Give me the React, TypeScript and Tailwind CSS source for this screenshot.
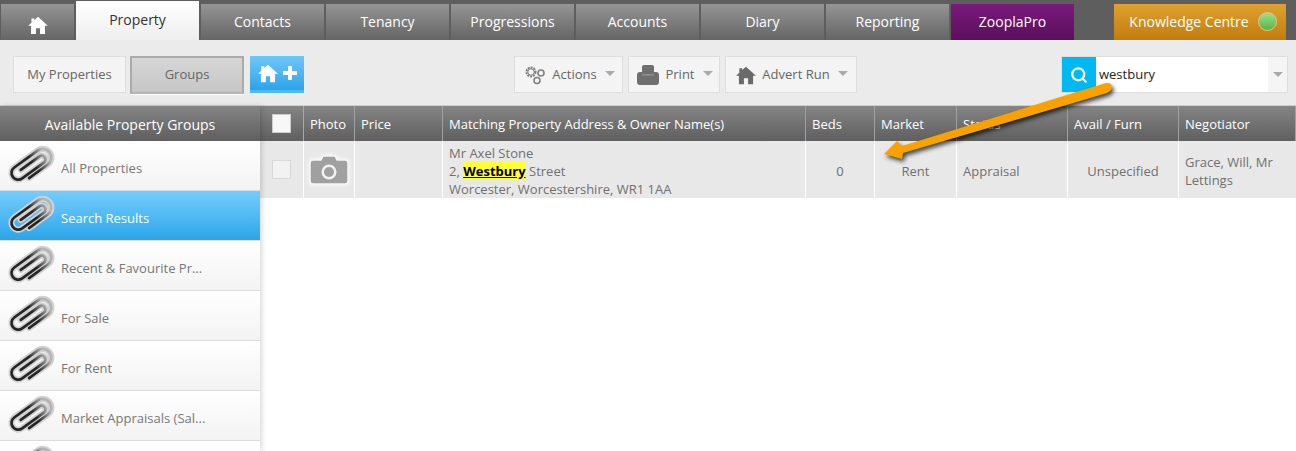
import { Search } from 'lucide-react'

const tabs = ['Contacts', 'Tenancy', 'Progressions', 'Accounts', 'Diary', 'Reporting']

const groups = [
  { name: 'All Properties' },
  { name: 'Search Results', active: true },
  { name: 'Recent & Favourite Pr...' },
  { name: 'For Sale' },
  { name: 'For Rent' },
  { name: 'Market Appraisals (Sal...' },
  { name: '' },
]

const columns = [
  { label: 'Photo', width: 'w-[51px]' },
  { label: 'Price', width: 'w-[88px]' },
  { label: 'Matching Property Address & Owner Name(s)', width: 'w-[363px]' },
  { label: 'Beds', width: 'w-[69px]' },
  { label: 'Market', width: 'w-[82px]' },
  { label: 'Status', width: 'w-[111px]' },
  { label: 'Avail / Furn', width: 'w-[111px]' },
  { label: 'Negotiator', width: 'flex-1' },
]

function HomeIcon({ className }: { className?: string }) {
  return (
    <svg viewBox="0 0 24 22" className={className} fill="currentColor">
      <path d="M12 1 L24 12 H20.5 V22 H14.5 V15 H9.5 V22 H3.5 V12 H0 L4 8.3 V3 H7.5 V5.1 Z" />
    </svg>
  )
}

function Paperclip() {
  const clip = 'M16 28 H40 a9 9 0 0 0 0 -18 H10 a7 7 0 0 0 0 14 H38 a4 4 0 0 0 0 -8 H14'
  return (
    <svg viewBox="0 0 50 38" className="h-[38px] w-[50px] shrink-0 overflow-visible">
      <defs>
        <linearGradient id="clipStroke" x1="0" y1="0.5" x2="1" y2="0.5">
          <stop offset="0.55" stopColor="#262626" />
          <stop offset="0.9" stopColor="#b4b4b4" />
        </linearGradient>
      </defs>
      <g transform="translate(25 19) rotate(-36) scale(0.96) translate(-25 -19)" fill="none" strokeLinecap="round">
        <path d={clip} stroke="#d2d2d2" strokeWidth="6.5" />
        <path d={clip} stroke="url(#clipStroke)" strokeWidth="2.8" />
      </g>
    </svg>
  )
}

function Gears() {
  return (
    <svg viewBox="0 0 22 20" className="h-5 w-[22px]" fill="none" stroke="#808080">
      <circle cx="7" cy="7" r="4.5" strokeWidth="2" strokeDasharray="2 0.9" />
      <circle cx="7" cy="7" r="3.2" strokeWidth="1" />
      <circle cx="17" cy="8" r="3" strokeWidth="1.6" />
      <circle cx="13" cy="15.5" r="3" strokeWidth="1.6" />
    </svg>
  )
}

function Printer() {
  return (
    <svg viewBox="0 0 22 20" className="h-5 w-[22px]" fill="#6f6f6f">
      <path d="M7 0 H15 a2 2 0 0 1 2 2 V9 H5 V2 a2 2 0 0 1 2 -2 Z" />
      <rect x="0" y="7" width="22" height="13" rx="3" />
      <rect x="5" y="9" width="12" height="1.5" fill="#929292" />
    </svg>
  )
}

function Camera() {
  return (
    <svg viewBox="0 0 40 30" className="h-[30px] w-[40px] drop-shadow-[0_0_2px_#ffffff]">
      <path d="M4 5 H12 L14 1 H26 L28 5 H36 a3 3 0 0 1 3 3 V26 a3 3 0 0 1 -3 3 H4 a3 3 0 0 1 -3 -3 V8 a3 3 0 0 1 3 -3 Z" fill="#a0a0a0" stroke="#f5f5f5" strokeWidth="1.5" />
      <circle cx="20" cy="17" r="7.5" fill="#f2f2f2" />
      <circle cx="20" cy="17" r="5" fill="#a0a0a0" />
    </svg>
  )
}

function Caret() {
  return <span className="h-0 w-0 border-x-[5px] border-t-[5px] border-x-transparent border-t-[#aaaaaa]" />
}

function ToolButton({ label, icon, width }: { label: string; icon: React.ReactNode; width: string }) {
  return (
    <button className={`flex h-[37px] items-center justify-center gap-[6px] border border-[#dedede] bg-[#f4f4f4] pl-[2px] text-[13px] text-[#666666] ${width}`}>
      {icon}
      <span>{label}</span>
      <span className="ml-[2px] mb-[3px] flex"><Caret /></span>
    </button>
  )
}

export default function App() {
  return (
    <div className="relative h-[451px] w-[1296px] overflow-hidden bg-white font-['Open_Sans',sans-serif] text-[13px] text-[#707070]">
      {/* Main tabs */}
      <div className="flex h-[40px] items-end bg-[#5e5e5e] pl-[1px]">
        <div className="flex h-[36px] w-[73px] items-center justify-center bg-gradient-to-b from-[#959595] to-[#656565] pt-[5px] text-white">
          <HomeIcon className="h-[18px] w-[20px]" />
        </div>
        <div className="ml-[2px] flex h-[39px] w-[123px] items-center justify-center bg-gradient-to-b from-white to-[#eeeeee] pb-[2px] text-[14px] text-[#333333]">
          Property
        </div>
        {tabs.map((tab) => (
          <div key={tab} className="ml-[2px] flex h-[36px] w-[123px] items-center justify-center bg-gradient-to-b from-[#959595] to-[#656565] pb-[2px] text-[14px] text-white">
            {tab}
          </div>
        ))}
        <div className="ml-[2px] flex h-[36px] w-[123px] items-center justify-center bg-gradient-to-b from-[#7b1a7c] to-[#5a0f5c] pb-[2px] text-[14px] text-white">
          ZooplaPro
        </div>
        <div className="ml-[40px] flex h-[36px] w-[172px] items-center justify-center gap-[9px] bg-gradient-to-b from-[#e0a130] to-[#c27c08] pb-[2px] pl-[6px] text-[14px] text-white">
          Knowledge Centre
          <span className="h-[19px] w-[19px] rounded-full border border-[#d8c890] bg-gradient-to-b from-[#9be08a] to-[#55b545]" />
        </div>
      </div>

      {/* Toolbar */}
      <div className="flex h-[66px] items-start border-b border-[#cfcfcf] bg-[#ebebeb] pl-[13px] pt-[16px]">
        <button className="flex h-[37px] w-[113px] items-center justify-center border border-[#dedede] bg-[#f4f4f4] text-[13px] text-[#666666]">
          My Properties
        </button>
        <button className="ml-[4px] flex h-[38px] w-[114px] items-center justify-center border-2 border-[#ababab] border-b-[#b5b5b5] bg-gradient-to-b from-[#d6d6d6] to-[#c6c6c6] text-[13px] text-[#666666] shadow-[0_1px_0_#ffffff]">
          Groups
        </button>
        <button className="ml-[6px] flex h-[37px] w-[54px] items-center justify-center gap-[5px] border-b-[3px] border-[#52b9f0] bg-gradient-to-b from-[#6dc7f8] to-[#27a5ea] text-white">
          <HomeIcon className="h-[20px] w-[20px]" />
          <svg viewBox="0 0 14 14" className="h-[14px] w-[14px]" fill="currentColor">
            <path d="M5 0 H9 V5 H14 V9 H9 V14 H5 V9 H0 V5 H5 Z" />
          </svg>
        </button>
        <div className="ml-[210px] flex items-center gap-[5px]">
          <ToolButton label="Actions" icon={<Gears />} width="w-[109px]" />
          <ToolButton label="Print" icon={<Printer />} width="w-[92px]" />
          <ToolButton label="Advert Run" icon={<HomeIcon className="h-[20px] w-[20px] text-[#6a6a6a]" />} width="w-[132px]" />
        </div>
        <div className="ml-[204px] flex h-[37px] w-[227px] items-stretch border border-[#dedede] bg-white">
          <div className="flex w-[34px] items-center justify-center bg-[#00b9f2] text-white">
            <Search size={18} strokeWidth={3} />
          </div>
          <span className="flex flex-1 items-center pl-[3px] text-[13px] text-[#222222]">westbury</span>
          <div className="flex w-[19px] items-center justify-center bg-[#f5f5f5]"><Caret /></div>
        </div>
      </div>

      <div className="flex">
        {/* Groups sidebar */}
        <div className="z-10 h-[345px] w-[260px] shrink-0 overflow-hidden shadow-[2px_0_5px_rgba(0,0,0,0.15)]">
          <div className="flex h-[35px] items-center justify-center bg-gradient-to-b from-[#858585] to-[#5f5f5f] pt-[1px] text-[14px] text-white">
            Available Property Groups
          </div>
          {groups.map((group, i) => (
            <div
              key={i}
              className={`flex h-[50px] items-center gap-[5px] border-b border-[#dcdcdc] pl-[6px] ${
                group.active
                  ? 'bg-gradient-to-b from-[#72cdfd] to-[#28a6ea] text-white'
                  : 'bg-gradient-to-b from-white to-[#f3f3f3] text-[#777777]'
              }`}
            >
              <Paperclip />
              <span className="truncate pt-[7px]">{group.name}</span>
            </div>
          ))}
        </div>

        {/* Results table */}
        <div className="flex-1">
          <div className="flex h-[35px] bg-gradient-to-b from-[#858585] to-[#5f5f5f] text-white">
            <div className="flex w-[44px] items-center justify-center border-r border-[#a8a8a8]">
              <span className="h-[19px] w-[19px] border border-[#cccccc] bg-[#f7f7f7]" />
            </div>
            {columns.map((col) => (
              <div key={col.label} className={`flex items-center border-r border-[#a0a0a0] pl-[6px] pt-[3px] ${col.width}`}>
                {col.label}
              </div>
            ))}
          </div>
          <div className="flex h-[57px] bg-[#e8e8e8]">
            <div className="flex w-[44px] items-center justify-center border-r border-white">
              <span className="h-[19px] w-[19px] border border-[#d8d8d8] bg-[#f2f2f2]" />
            </div>
            <div className="flex w-[51px] items-center justify-center border-r border-white"><Camera /></div>
            <div className="w-[88px] border-r border-white" />
            <div className="w-[363px] border-r border-white pl-[6px] pt-[3px] leading-[18px]">
              <div>Mr Axel Stone</div>
              <div>
                2, <span className="bg-[#ffff33] font-bold text-black underline">Westbury</span> Street
              </div>
              <div>Worcester, Worcestershire, WR1 1AA</div>
            </div>
            <div className="flex w-[69px] items-center justify-center border-r border-white pt-[5px]">0</div>
            <div className="flex w-[82px] items-center justify-center border-r border-white pt-[5px]">Rent</div>
            <div className="flex w-[111px] items-center border-r border-white pl-[6px] pt-[5px]">Appraisal</div>
            <div className="flex w-[111px] items-center justify-center border-r border-white pt-[5px]">Unspecified</div>
            <div className="flex flex-1 items-center pl-[6px] pt-[2px] leading-[18px]">Grace, Will, Mr<br />Lettings</div>
          </div>
        </div>
      </div>

      {/* Annotation arrow drawn over the screenshot */}
      <svg className="pointer-events-none absolute left-[870px] top-[70px] overflow-visible drop-shadow-[2px_3px_2px_rgba(0,0,0,0.7)]" width="260" height="100" viewBox="0 0 260 100">
        <path d="M235 13.3 Q242 12 242 18 Q241 21 237 23 L33 83 L32 89 L14 84 L27 71 L32 76 Z" fill="#f9a100" />
      </svg>
    </div>
  )
}
